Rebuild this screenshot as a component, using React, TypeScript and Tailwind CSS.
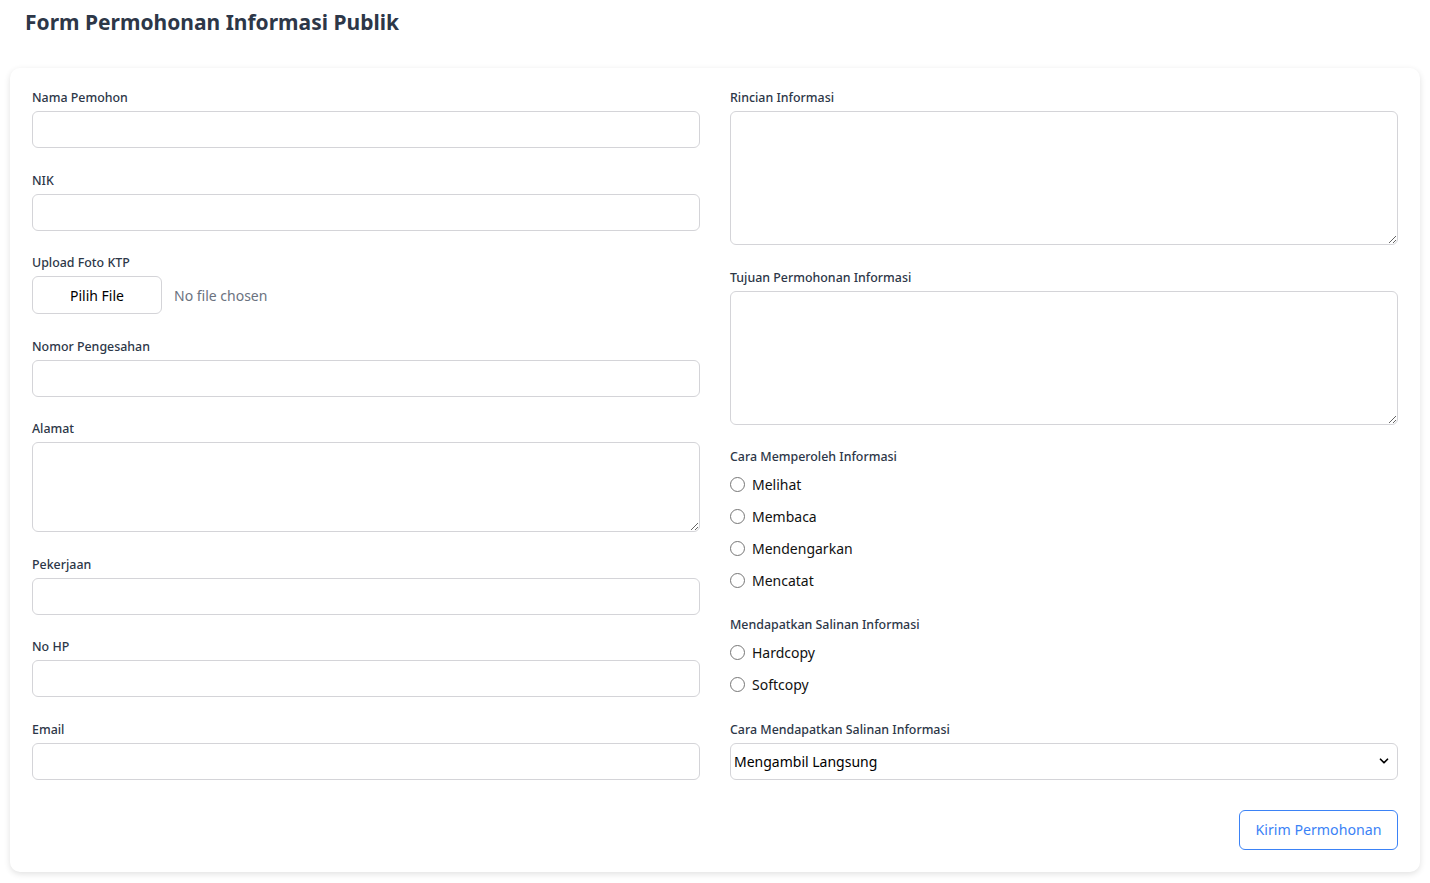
import { ChevronDown } from "lucide-react";

const inputCls =
  "block h-[37px] w-full rounded-md border border-[#d4d4d8] bg-white px-3 text-[15px] text-black outline-none";
const areaCls =
  "block w-full rounded-md border border-[#d4d4d8] bg-white px-3 py-2 text-[15px] outline-none";
const labelCls = "mb-1 block text-[12.4px] leading-[19px] font-medium text-[#2d3748]";

const Field = ({ label, children }: { label: string; children: React.ReactNode }) => (
  <div className="mb-[22.5px]">
    <label className={labelCls}>{label}</label>
    {children}
  </div>
);

const RadioGroup = ({ name, options }: { name: string; options: string[] }) => (
  <div className="flex flex-col">
    {options.map((opt) => (
      <label key={opt} className="flex h-8 items-center gap-[7px] text-[14px] text-[#111]">
        <input
          type="radio"
          name={name}
          className="m-0 h-[15px] w-[15px] appearance-none rounded-full border border-[#767676] bg-white"
        />
        {opt}
      </label>
    ))}
  </div>
);

export default function App() {
  return (
    <div className="min-h-[883px] bg-white px-[10px] pt-[6px] font-['Noto_Sans',sans-serif]">
      <h1 className="ml-[15px] text-[21px] leading-8 font-bold text-[#2d3748]">
        Form Permohonan Informasi Publik
      </h1>

      <form className="mt-[30px] rounded-[10px] bg-white px-[22px] pt-5 pb-[22px] shadow-[0_2px_6px_rgba(0,0,0,0.12)]">
        <div className="grid grid-cols-2 gap-x-[30px]">
          <div>
            <Field label="Nama Pemohon">
              <input className={inputCls} />
            </Field>
            <Field label="NIK">
              <input className={inputCls} />
            </Field>
            <Field label="Upload Foto KTP">
              <div className="flex items-center gap-3">
                <span className="flex h-[38px] w-[130px] items-center justify-center rounded-md border border-[#d4d4d8] text-[14px] text-black">
                  Pilih File
                </span>
                <span className="text-[14px] text-[#6b7280]">No file chosen</span>
              </div>
            </Field>
            <Field label="Nomor Pengesahan">
              <input className={inputCls} />
            </Field>
            <Field label="Alamat">
              <textarea className={`${areaCls} h-[90px]`} />
            </Field>
            <Field label="Pekerjaan">
              <input className={inputCls} />
            </Field>
            <Field label="No HP">
              <input className={inputCls} />
            </Field>
            <div>
              <label className={labelCls}>Email</label>
              <input className={inputCls} />
            </div>
          </div>

          <div>
            <Field label="Rincian Informasi">
              <textarea className={`${areaCls} h-[134px]`} />
            </Field>
            <Field label="Tujuan Permohonan Informasi">
              <textarea className={`${areaCls} h-[134px]`} />
            </Field>
            <div className="mb-[18px]">
              <label className="mb-[2.5px] block text-[12.4px] leading-[19px] font-medium text-[#2d3748]">
                Cara Memperoleh Informasi
              </label>
              <RadioGroup name="cara" options={["Melihat", "Membaca", "Mendengarkan", "Mencatat"]} />
            </div>
            <div className="mb-[19px]">
              <label className="mb-[3px] block text-[12.4px] leading-[19px] font-medium text-[#2d3748]">
                Mendapatkan Salinan Informasi
              </label>
              <RadioGroup name="salinan" options={["Hardcopy", "Softcopy"]} />
            </div>
            <div>
              <label className={labelCls}>Cara Mendapatkan Salinan Informasi</label>
              <div className="relative">
                <select className="block h-[37px] w-full appearance-none rounded-md border border-[#d4d4d8] bg-white pl-[3px] text-[14px] text-black outline-none">
                  <option>Mengambil Langsung</option>
                  <option>Dikirim via Email</option>
                  <option>Dikirim via Pos</option>
                </select>
                <ChevronDown
                  size={14}
                  strokeWidth={3}
                  className="pointer-events-none absolute top-1/2 right-[7px] -translate-y-1/2 text-black"
                />
              </div>
            </div>
          </div>
        </div>

        <div className="mt-[30px] flex justify-end">
          <button
            type="button"
            className="h-10 w-[159px] rounded-md border border-[#3b82f6] bg-white text-[14.2px] text-[#3b82f6]"
          >
            Kirim Permohonan
          </button>
        </div>
      </form>
    </div>
  );
}
